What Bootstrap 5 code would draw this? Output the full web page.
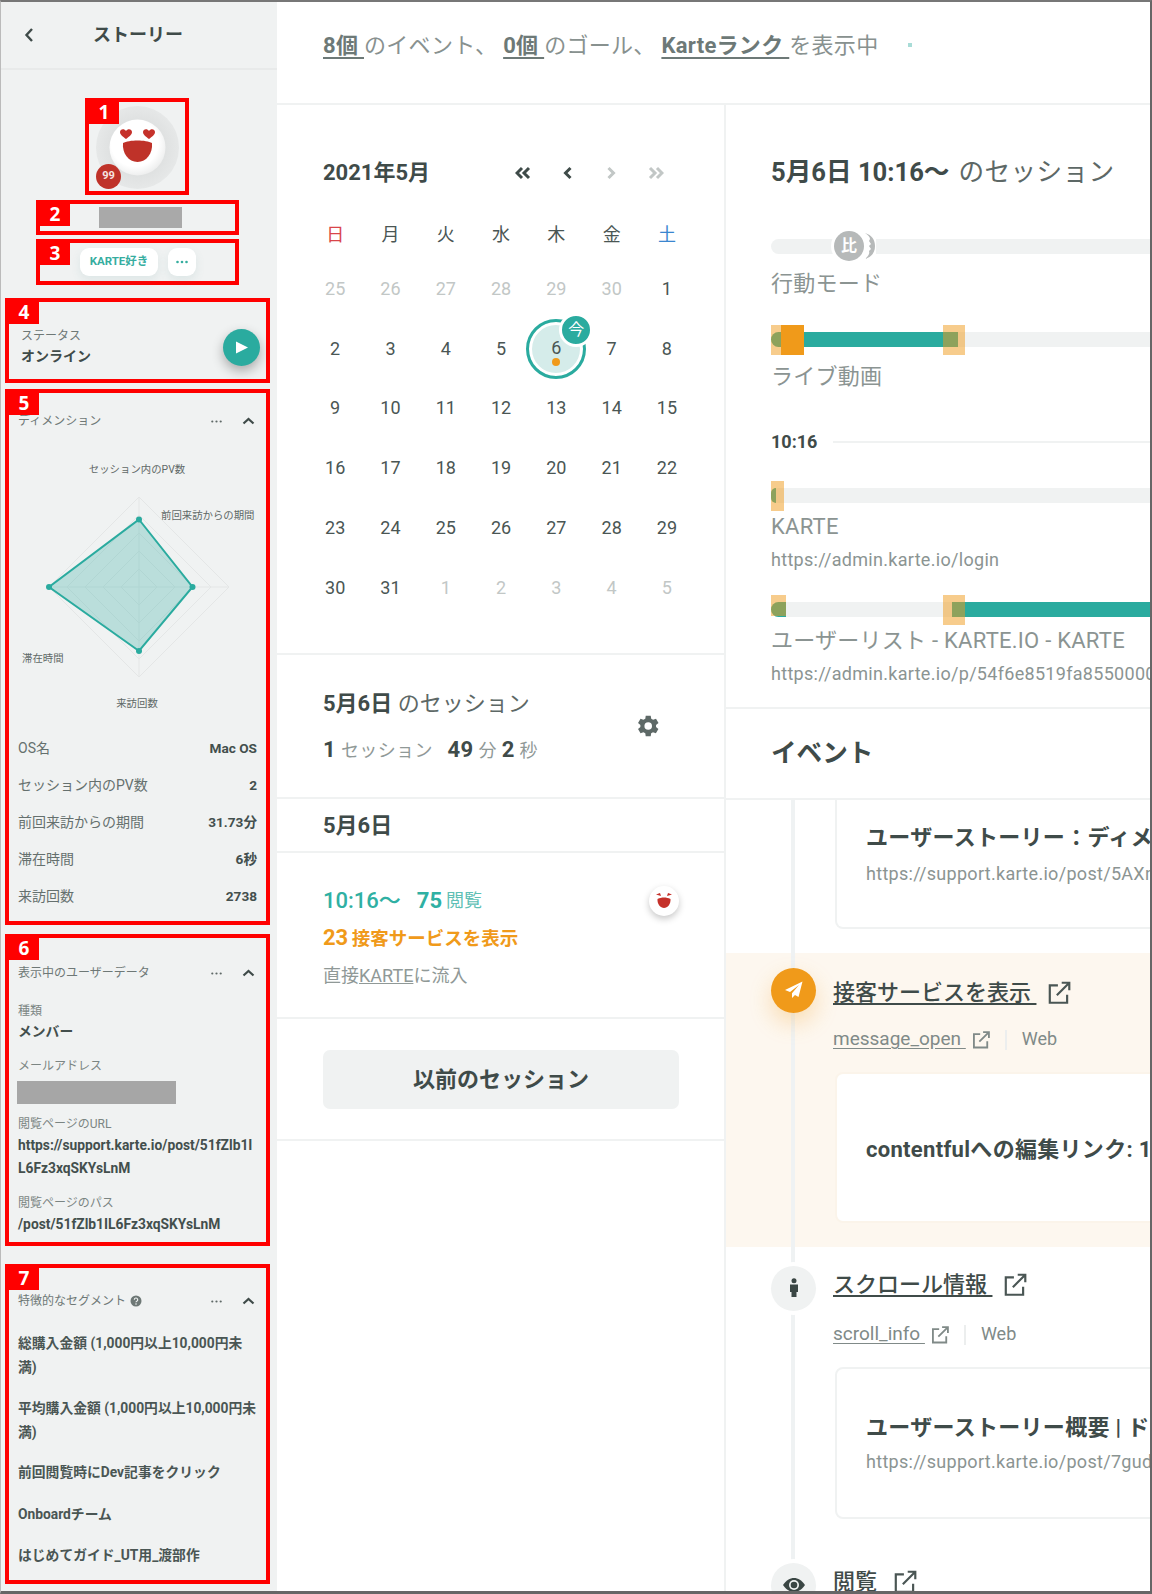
<!DOCTYPE html>
<html lang="ja">
<head>
<meta charset="utf-8">
<title>ストーリー</title>
<link href="https://cdn.jsdelivr.net/npm/bootstrap@5.3.0/dist/css/bootstrap.min.css" rel="stylesheet">
<style>
html,body{margin:0;height:100%;overflow:hidden;background:#fff}
body{font-family:Roboto,"Noto Sans CJK JP",sans-serif;color:#3f4b49;font-size:14px}
.frame{width:1152px;height:1594px;border-top:2px solid #777;border-right:2px solid #666;border-bottom:3px solid #666;border-left:1px solid #bbb;overflow:hidden;box-sizing:border-box}
.side{width:276px;flex:none;background:#f0f2f2;height:100%}
.side-head{height:68px;border-bottom:2px solid #e8eaea;padding-left:22px}
.side-head h1{font-size:18px;font-weight:700;margin:0;flex:1;text-align:center;padding-right:36px;color:#3f4b49}
.note{border:4px solid #f00;position:relative;box-sizing:border-box}
.tag{position:absolute;left:0;top:0;width:30px;height:22px;background:#f00;color:#fff;font:700 19px/21px "Open Sans",sans-serif;text-align:center;z-index:3}
.n1{width:104px;height:97px;margin:28px 0 0 84px}
.n2{width:203px;height:35px;margin:5px 0 0 35px}
.n3{width:203px;height:46px;margin:4px 0 0 35px;padding-top:5px;padding-left:40px;gap:10px}
.n4{width:265px;height:85px;margin:13px 0 0 4px;padding-left:12px}
.n5{width:265px;height:536px;margin:6px 0 0 4px;padding:16px 9px 0 9px}
.n6{width:265px;height:312px;margin:9px 0 0 4px;padding:23px 9px 0 9px}
.n7{width:265px;height:320px;margin:18px 0 0 4px;padding:21px 9px 0 9px}
.avatar-svg{display:block;margin:4px 0 0 7px}
.rank{position:absolute;left:7px;top:62px;width:25px;height:25px;background:#bf3229;color:#f6e4e2;font-size:11px;font-weight:700;z-index:2}
.mask-a{width:83px;height:21px;background:#a9a9a9;margin:3px 0 0 59px}
.mask-b{width:159px;height:23px;background:#a6a6a6;margin:5px 0 10px -1px}
.pill{height:28px;background:#fff;border-radius:9px;color:#36ad9f;font-size:11.5px;font-weight:700;box-shadow:0 4px 10px rgba(80,150,145,.12)}
.pill-a{width:78px}.pill-b{width:28px}
.st-lab{font-size:12px;height:20px;line-height:20px;margin-top:24px;color:#6e7876}
.st-val{font-size:14px;font-weight:700;height:22px;line-height:22px;margin-top:-1px;color:#3f4b49}
.play{width:37px;height:37px;background:#2aab9f;box-shadow:0 5px 12px rgba(0,0,0,.3);margin:27px 6px 0 0}
.sec-h{height:24px;font-size:12px;color:#6e7876}
.sec-tools{gap:20px;margin-right:2px}
.radar{display:block;margin:-1px 0 0 -9px;width:257px;height:298px}
.radar text{font-family:Roboto,"Noto Sans CJK JP",sans-serif;font-size:10.4px;fill:#5f6967}
.stat{height:37px;font-size:14px;color:#65706e}
.stat b{font-weight:700;color:#434f4d;font-size:13.6px}
.ud-lab{height:20px;line-height:20px;font-size:12px;color:#7b8583}
.ud-val{font-size:13.8px;font-weight:700;line-height:23px;color:#434f4d;white-space:nowrap}
.seg{font-size:13.8px;font-weight:700;line-height:23.5px;color:#4a5654;white-space:nowrap;margin-top:18px}
.main{flex:1;min-width:0;height:100%}
.top{height:103px;border-bottom:2px solid #f0f2f2;padding:0 0 14px 46px;font-size:22px;letter-spacing:.3px;color:#88918f;white-space:pre;position:relative}
.top u{font-weight:700;color:#6d7977;text-underline-offset:4px}
.top .speck{width:4px;height:4px;background:#a8dcd7;margin-left:30px;display:inline-block}
.col-l{width:449px;flex:none;border-right:2px solid #f0f2f2;height:100%}
.col-r{flex:1;min-width:0;overflow:hidden;height:100%}
.cal{height:550px;border-bottom:2px solid #f0f2f2;padding:48px 0 0 30px;box-sizing:border-box}
.cal-head{height:40px;width:387px;padding-left:16px}
.cal-title{font-size:22px;font-weight:700;color:#3f4b49}
.cal-nav{margin-right:14px;width:165px}
.days{display:grid;grid-template-columns:repeat(7,55.3px);width:387px;margin-left:.5px}
.wd{height:40px;margin-top:22px;font-size:18px;color:#4a5654}
.dw{display:flex;align-items:center;justify-content:center}
.dn{height:59.8px;font-size:18px;color:#4a5654;position:relative}
.off{color:#c2c7c6}
.ring{position:absolute;left:50%;top:50%;width:60px;height:60px;margin:-29px 0 0 -30px;border:3px solid #2aab9f;background:#d5ecea;box-shadow:inset 0 0 0 3px #fff}
.today-num{position:relative;margin-top:-2px}
.odot{position:absolute;left:50%;top:50%;width:8px;height:8px;margin:10px 0 0 -4px;background:#f09a1a}
.now{position:absolute;left:50%;top:50%;width:34px;height:34px;margin:-35px 0 0 3px;background:#2aab9f;border:3px solid #fff;color:#fff;font-size:16px;line-height:1}
.sess{height:144px;border-bottom:2px solid #f0f2f2;padding:0 45px 0 46px;box-sizing:border-box}
.sess-txt{margin-bottom:5px}
.sess-a{height:46px;line-height:46px;font-size:22px;color:#5d6866}
.sess-a b{color:#3f4b49}
.sess-b{height:32px;line-height:32px;margin-top:7px;font-size:18px;letter-spacing:.4px;color:#909997}
.sess-b b{font-size:22px;color:#3f4b49}
.gear{margin-right:18px}
.t22{font-size:22px}.t18{font-size:18px}
.gry{color:#909997}
.day-row{height:54px;border-bottom:2px solid #f0f2f2;padding:1px 0 0 46px;font-size:22px;font-weight:700;box-sizing:border-box}
.visit{height:166px;border-bottom:2px solid #f0f2f2;padding:33px 45px 0 46px;box-sizing:border-box;position:relative}
.ln{height:30px;line-height:30px;white-space:nowrap}
.ln-m{margin-top:7px}
.ln-n{margin-top:8px}
.teal{color:#2fb0a3}.org{color:#f09a1a}
.mini{width:30px;height:30px;background:#fff;box-shadow:0 3px 7px rgba(0,0,0,.22);margin:0}
.prev-wrap{height:122px;border-bottom:2px solid #f0f2f2;padding:31px 45px 0 46px;box-sizing:border-box}
.btn.prev{width:100%;height:59px;background:#f0f2f2;border:0;border-radius:7px;font-size:22px;font-weight:700;color:#3f4b49;padding:0}
.sum{padding:48px 0 21px 45px;border-bottom:2px solid #f0f2f2;white-space:nowrap;height:604px;box-sizing:border-box}
.sum-title{height:40px;font-size:25.6px;color:#5d6866}
.sum-title b{color:#3f4b49}
.sum-rest{margin-left:9px;letter-spacing:.4px}
.bar{height:15px;background:#f0f2f2;border-radius:8px 0 0 8px;position:relative;width:600px}
.fill{position:absolute;top:0;bottom:0;background:#2aab9f}
.fill-l{border-radius:8px 0 0 8px}
.box-o{position:absolute;background:rgba(240,154,26,.5)}
.box-s{position:absolute;background:#f09a1a}
.mode{position:absolute;left:63px;top:-8px;width:30px;height:30px;background:#b6b9b9;color:#fff;font-size:16px;font-weight:700;box-shadow:0 0 0 3px #fff}
.moon{position:absolute;left:93px;top:-9px;width:12px;height:32px;background:#fff}
.lab{height:30px;line-height:30px;font-size:22px;letter-spacing:.25px;color:#8b9492}
.url{height:28px;line-height:28px;font-size:18px;letter-spacing:.3px;color:#8b9492}
.time{height:24px;font-size:18px;font-weight:700}
.time i{flex:1;height:2px;background:#f0f2f2;margin-left:16px;display:block}
.ev-head{height:91px;border-bottom:2px solid #f0f2f2;padding:0 0 0 45px;font-size:25.6px;font-weight:700;color:#3f4b49;box-sizing:border-box}
.tl{position:relative;white-space:nowrap;height:800px}
.tl-line{position:absolute;left:65px;top:0;bottom:0;width:4px;background:#eff2f3;z-index:1}
.ev{position:relative;padding-left:107px}
.ev-ic{position:absolute;left:45px;width:45px;height:45px;z-index:2}
.ev-ic.o{background:#f09a1a;box-shadow:0 10px 22px rgba(240,154,26,.28)}
.ev-ic.g{background:#f0f2f2;box-shadow:0 0 0 4px #fff}
.ev-t{height:32px;font-size:22px;font-weight:500;color:#3f4b49}
.ev-t u,.ev-s u{text-underline-offset:3px;white-space:pre}
.ev-t svg{margin-left:10px}
.ev-s{height:28px;font-size:19px;color:#808a88}
.ev-s svg{margin-left:5px}
.ev-s .sep{width:2px;height:20px;background:#eceeee;margin:0 15px 0 14px}
.ev-s .web{font-size:18px;margin-top:-2px}
.ev-card{width:500px;margin-left:2px;background:#fff;border:2px solid #f0f2f2;border-radius:8px;padding-left:29px;box-sizing:border-box}
.card-t{font-size:22px;font-weight:700;height:30px;line-height:30px;letter-spacing:.3px;color:#3f4b49}
.card-u{font-size:18px;height:28px;line-height:28px;letter-spacing:.3px;color:#8b9492}
.band{background:#fdf7ef;height:294px;margin-top:24px;padding-top:24px}
.band .ev-card{border-color:#fbf4ea}
</style>
</head>
<body>
<div class="frame d-flex">
  <aside class="side">
    <div class="side-head d-flex align-items-center">
      <svg width="12" height="16" viewBox="0 0 12 16"><path d="M9 2 3.500 8 9 14" fill="none" stroke="#3f4b49" stroke-width="2.400"/></svg>
      <h1>ストーリー</h1>
    </div>

    <div class="note n1">
      <span class="tag">1</span>
      <svg class="avatar-svg" width="83" height="83" viewBox="0 0 83 83">
        <defs>
          <radialGradient id="halo"><stop offset="0" stop-color="#cfd2d2"/><stop offset=".75" stop-color="#e1e3e3"/><stop offset="1" stop-color="#e6e8e8"/></radialGradient>
          <radialGradient id="ball" cx=".45" cy=".42" r=".6"><stop offset=".7" stop-color="#fff"/><stop offset="1" stop-color="#eceded"/></radialGradient>
        </defs>
        <circle cx="41.500" cy="41.500" r="41.500" fill="url(#halo)"/>
        <circle cx="41.500" cy="41.500" r="28" fill="url(#ball)"/>
        <path d="M30 33c-3-2.300-6-4.300-6-7 0-3.200 4.300-4 6-1 1.700-3 6-2.200 6 1 0 2.700-3 4.700-6 7z" fill="#c5312a"/>
        <path d="M53 33c-3-2.300-6-4.300-6-7 0-3.200 4.300-4 6-1 1.700-3 6-2.200 6 1 0 2.700-3 4.700-6 7z" fill="#c5312a"/>
        <path d="M27 37c6-3.500 23-3.500 29 0 1 10-5.500 19-14.500 19S26 47 27 37z" fill="#bf3229"/>
      </svg>
      <span class="rank rounded-circle d-flex align-items-center justify-content-center">99</span>
    </div>

    <div class="note n2"><span class="tag">2</span><div class="mask-a"></div></div>

    <div class="note n3 d-flex"><span class="tag">3</span>
      <span class="pill pill-a d-flex align-items-center justify-content-center">KARTE好き</span>
      <span class="pill pill-b d-flex align-items-center justify-content-center"><svg width="12" height="4" viewBox="0 0 12 4" fill="#36ad9f"><circle cx="1.500" cy="2" r="1.300"/><circle cx="6" cy="2" r="1.300"/><circle cx="10.500" cy="2" r="1.300"/></svg></span>
    </div>

    <div class="note n4 d-flex justify-content-between align-items-start"><span class="tag">4</span>
      <div><div class="st-lab">ステータス</div><div class="st-val">オンライン</div></div>
      <span class="play rounded-circle d-flex align-items-center justify-content-center"><svg width="15" height="15" viewBox="0 0 15 15"><path d="M2 1.500 14 7.500 2 13.500z" fill="#fff"/></svg></span>
    </div>

    <div class="note n5"><span class="tag">5</span>
      <div class="sec-h d-flex justify-content-between align-items-center"><span>ディメンション</span>
        <span class="sec-tools d-flex align-items-center"><svg width="11" height="3" viewBox="0 0 11 3" fill="#5f6967"><circle cx="1.300" cy="1.500" r="1.100"/><circle cx="5.500" cy="1.500" r="1.100"/><circle cx="9.700" cy="1.500" r="1.100"/></svg><svg width="13" height="8" viewBox="0 0 13 8"><path d="M1.500 6.500 6.500 2l5 4.500" fill="none" stroke="#3f4b49" stroke-width="2.200"/></svg></span>
      </div>
      <svg class="radar" viewBox="0 0 257 298">
        <g fill="none" stroke="#e4e6e6" stroke-width="1">
          <path d="M130 137l18 18-18 18-18-18z"/>
          <path d="M130 119l36 36-36 36-36-36z"/>
          <path d="M130 101l54 54-54 54-54-54z"/>
          <path d="M130 83l72 72-72 72-72-72z"/>
          <path d="M130 65l90 90-90 90-90-90z"/>
          <path d="M130 65v180M40 155h180"/>
        </g>
        <path d="M130 87.500 183.500 155 130 219 40 155z" fill="#2aab9f" fill-opacity=".27" stroke="#2aab9f" stroke-width="2"/>
        <g fill="#2aab9f"><circle cx="130" cy="87.500" r="3"/><circle cx="183.500" cy="155" r="3"/><circle cx="130" cy="219" r="3"/><circle cx="40" cy="155" r="3"/></g>
        <text x="128" y="41" text-anchor="middle">セッション内のPV数</text>
        <text x="152" y="87">前回来訪からの期間</text>
        <text x="13" y="230">滞在時間</text>
        <text x="128" y="275" text-anchor="middle">来訪回数</text>
      </svg>
      <div class="stat d-flex justify-content-between align-items-center"><span>OS名</span><b>Mac OS</b></div>
      <div class="stat d-flex justify-content-between align-items-center"><span>セッション内のPV数</span><b>2</b></div>
      <div class="stat d-flex justify-content-between align-items-center"><span>前回来訪からの期間</span><b>31.73分</b></div>
      <div class="stat d-flex justify-content-between align-items-center"><span>滞在時間</span><b>6秒</b></div>
      <div class="stat d-flex justify-content-between align-items-center"><span>来訪回数</span><b>2738</b></div>
    </div>

    <div class="note n6"><span class="tag">6</span>
      <div class="sec-h d-flex justify-content-between align-items-center"><span>表示中のユーザーデータ</span>
        <span class="sec-tools d-flex align-items-center"><svg width="11" height="3" viewBox="0 0 11 3" fill="#5f6967"><circle cx="1.300" cy="1.500" r="1.100"/><circle cx="5.500" cy="1.500" r="1.100"/><circle cx="9.700" cy="1.500" r="1.100"/></svg><svg width="13" height="8" viewBox="0 0 13 8"><path d="M1.500 6.500 6.500 2l5 4.500" fill="none" stroke="#3f4b49" stroke-width="2.200"/></svg></span>
      </div>
      <div class="ud-lab mt-3">種類</div>
      <div class="ud-val" style="margin-top:-1px">メンバー</div>
      <div class="ud-lab" style="margin-top:13px">メールアドレス</div>
      <div class="mask-b"></div>
      <div class="ud-lab">閲覧ページのURL</div>
      <div class="ud-val">https://support.karte.io/post/51fZlb1I<br>L6Fz3xqSKYsLnM</div>
      <div class="ud-lab" style="margin-top:13px">閲覧ページのパス</div>
      <div class="ud-val">/post/51fZlb1IL6Fz3xqSKYsLnM</div>
    </div>

    <div class="note n7"><span class="tag">7</span>
      <div class="sec-h d-flex justify-content-between align-items-center"><span class="d-flex align-items-center gap-1">特徴的なセグメント <svg width="12" height="12" viewBox="0 0 12 12"><circle cx="6" cy="6" r="5.500" fill="#6e7876"/><path d="M4.300 4.700a1.700 1.700 0 1 1 2.500 1.500c-.6.300-.8.600-.8 1.100" fill="none" stroke="#f0f2f2" stroke-width="1.200"/><circle cx="6" cy="9" r=".8" fill="#f0f2f2"/></svg></span>
        <span class="sec-tools d-flex align-items-center"><svg width="11" height="3" viewBox="0 0 11 3" fill="#5f6967"><circle cx="1.300" cy="1.500" r="1.100"/><circle cx="5.500" cy="1.500" r="1.100"/><circle cx="9.700" cy="1.500" r="1.100"/></svg><svg width="13" height="8" viewBox="0 0 13 8"><path d="M1.500 6.500 6.500 2l5 4.500" fill="none" stroke="#3f4b49" stroke-width="2.200"/></svg></span>
      </div>
      <div class="seg" style="margin-top:19px">総購入金額 (1,000円以上10,000円未<br>満)</div>
      <div class="seg">平均購入金額 (1,000円以上10,000円未<br>満)</div>
      <div class="seg" style="margin-top:17px">前回閲覧時にDev記事をクリック</div>
      <div class="seg">Onboardチーム</div>
      <div class="seg">はじめてガイド_UT用_渡部作</div>
    </div>
  </aside>

  <div class="main d-flex flex-column">
    <div class="top d-flex align-items-center"><span><u>8個 </u>のイベント、 <u>0個 </u>のゴール、 <u>Karteランク </u>を表示中</span><span class="speck"></span></div>
    <div class="d-flex flex-grow-1" style="min-height:0">
      <div class="col-l">
        <div class="cal">
          <div class="cal-head d-flex justify-content-between align-items-center">
            <span class="cal-title">2021年5月</span>
            <span class="cal-nav d-flex align-items-center justify-content-between pe-3">
              <svg width="16" height="14" viewBox="0 0 16 14"><path d="M7 2 2 7l5 5M14 2 9 7l5 5" fill="none" stroke="#3f4b49" stroke-width="3"/></svg>
              <svg width="10" height="14" viewBox="0 0 10 14"><path d="M7.500 2 2.500 7l5 5" fill="none" stroke="#3f4b49" stroke-width="3"/></svg>
              <svg width="10" height="14" viewBox="0 0 10 14"><path d="M2.500 2l5 5-5 5" fill="none" stroke="#c2c7c6" stroke-width="3"/></svg>
              <svg width="16" height="14" viewBox="0 0 16 14"><path d="M2 2l5 5-5 5M9 2l5 5-5 5" fill="none" stroke="#c2c7c6" stroke-width="3"/></svg>
            </span>
          </div>
          <div class="days wd mb-1">
            <span class="dw" style="color:#d9454a">日</span><span class="dw">月</span><span class="dw">火</span><span class="dw">水</span><span class="dw">木</span><span class="dw">金</span><span class="dw" style="color:#3a86cf">土</span>
          </div>
          <div class="days">
            <span class="dw dn off">25</span><span class="dw dn off">26</span><span class="dw dn off">27</span><span class="dw dn off">28</span><span class="dw dn off">29</span><span class="dw dn off">30</span><span class="dw dn">1</span>
            <span class="dw dn">2</span><span class="dw dn">3</span><span class="dw dn">4</span><span class="dw dn">5</span>
            <span class="dw dn"><span class="ring rounded-circle"></span><span class="today-num">6</span><span class="odot rounded-circle"></span><span class="now rounded-circle d-flex align-items-center justify-content-center">今</span></span>
            <span class="dw dn">7</span><span class="dw dn">8</span>
            <span class="dw dn">9</span><span class="dw dn">10</span><span class="dw dn">11</span><span class="dw dn">12</span><span class="dw dn">13</span><span class="dw dn">14</span><span class="dw dn">15</span>
            <span class="dw dn">16</span><span class="dw dn">17</span><span class="dw dn">18</span><span class="dw dn">19</span><span class="dw dn">20</span><span class="dw dn">21</span><span class="dw dn">22</span>
            <span class="dw dn">23</span><span class="dw dn">24</span><span class="dw dn">25</span><span class="dw dn">26</span><span class="dw dn">27</span><span class="dw dn">28</span><span class="dw dn">29</span>
            <span class="dw dn">30</span><span class="dw dn">31</span><span class="dw dn off">1</span><span class="dw dn off">2</span><span class="dw dn off">3</span><span class="dw dn off">4</span><span class="dw dn off">5</span>
          </div>
        </div>

        <div class="sess d-flex justify-content-between align-items-center">
          <div class="sess-txt">
            <div class="sess-a text-nowrap"><b>5月6日</b> のセッション</div>
            <div class="sess-b text-nowrap"><b>1</b> セッション &nbsp; <b>49</b> 分 <b>2</b> 秒</div>
          </div>
          <svg class="gear" width="26" height="26" viewBox="0 0 24 24"><path fill="#5e6967" d="M19.400 13a7.700 7.700 0 0 0 0-2l2.300-1.800-2.300-4-2.700 1.100a8 8 0 0 0-1.700-1L14.500 2.500h-4.600L9.500 5.300a8 8 0 0 0-1.700 1L5.100 5.200l-2.300 4L5 11a7.700 7.700 0 0 0 0 2l-2.200 1.800 2.300 4 2.700-1.100a8 8 0 0 0 1.700 1l.4 2.800h4.600l.4-2.800a8 8 0 0 0 1.700-1l2.700 1.100 2.300-4zM12.200 15.500a3.500 3.500 0 1 1 0-7 3.500 3.500 0 0 1 0 7z"/></svg>
        </div>

        <div class="day-row d-flex align-items-center">5月6日</div>

        <div class="visit d-flex justify-content-between">
          <div>
            <div class="ln teal d-flex align-items-center"><span class="t22" style="font-weight:500">10:16〜</span><b class="t22 ms-3">75</b><span class="t18 ms-1" style="color:#5fbfb5">閲覧</span></div>
            <div class="ln ln-m org"><b class="t22">23</b> <b style="font-size:18.500px">接客サービスを表示</b></div>
            <div class="ln ln-n t18 gry">直接<u>KARTE</u>に流入</div>
          </div>
          <span class="mini rounded-circle d-flex align-items-center justify-content-center"><svg width="20" height="18" viewBox="0 0 20 18"><path d="M2 2.500 6 1l1 3zM18 2.500 14 1l-1 3z" fill="#c5312a"/><path d="M3.500 7c4-2 9-2 13 0 .5 5-3 9-6.500 9s-7-4-6.500-9z" fill="#c5312a"/></svg></span>
        </div>

        <div class="prev-wrap"><button type="button" class="btn prev">以前のセッション</button></div>
      </div>

      <div class="col-r">
        <div class="sum">
          <div class="sum-title d-flex align-items-center"><b>5月6日 10:16〜</b><span class="sum-rest">のセッション</span></div>
          <div class="bar" style="margin-top:46px"><span class="mode rounded-circle d-flex align-items-center justify-content-center">比</span><span class="moon"><svg width="12" height="32" viewBox="0 0 12 32"><path d="M1 3c7 2 10 7 10 13s-3 11-10 13c3-3 5-5 4-8l2-2-2-3 2-2-2-3 1-2c0-2-2-4-5-6z" fill="#b6b9b9"/></svg></span></div>
          <div class="lab" style="margin-top:15px">行動モード</div>
          <div class="bar" style="margin-top:33px">
            <span class="fill fill-l" style="left:0;width:187px"></span>
            <span class="box-o" style="left:0;top:-7px;width:33px;height:30px"></span>
            <span class="box-s" style="left:10px;top:-7px;width:23px;height:30px"></span>
            <span class="box-o" style="left:172px;top:-7px;width:22px;height:30px"></span>
          </div>
          <div class="lab" style="margin-top:15px">ライブ動画</div>
          <div class="time d-flex align-items-center" style="margin-top:38px"><span>10:16</span><i></i></div>
          <div class="bar" style="margin-top:34px">
            <span class="fill fill-l" style="left:0;width:5px"></span>
            <span class="box-o" style="left:0;top:-7px;width:13px;height:30px"></span>
          </div>
          <div class="lab" style="margin-top:9px">KARTE</div>
          <div class="url" style="margin-top:4px">https://admin.karte.io/login</div>
          <div class="bar" style="margin-top:28px">
            <span class="fill fill-l" style="left:0;width:15px"></span>
            <span class="fill" style="left:181px;right:0"></span>
            <span class="box-o" style="left:0;top:-7px;width:15px;height:21px"></span>
            <span class="box-o" style="left:172px;top:-7px;width:22px;height:30px"></span>
          </div>
          <div class="lab" style="margin-top:9px">ユーザーリスト - KARTE.IO - KARTE</div>
          <div class="url" style="margin-top:4px">https://admin.karte.io/p/54f6e8519fa8550000</div>
        </div>

        <div class="ev-head d-flex align-items-center">イベント</div>

        <div class="tl">
          <span class="tl-line"></span>
          <div class="ev">
            <div class="ev-card" style="height:129px;border-top:0;border-radius:0 0 8px 8px;padding-top:23px">
              <div class="card-t">ユーザーストーリー：ディメンション</div>
              <div class="card-u" style="margin-top:7px">https://support.karte.io/post/5AXn</div>
            </div>
          </div>
          <div class="ev band">
            <span class="ev-ic o rounded-circle d-flex align-items-center justify-content-center" style="top:15px"><svg width="20" height="20" viewBox="0 0 20 20"><path d="M18.500 1.500 1 10l5 2 9-7-7 8.200V18l3-3 3.500 2z" fill="#fff"/></svg></span>
            <div class="ev-t d-flex align-items-center"><u>接客サービスを表示 </u><svg width="26" height="26" viewBox="0 0 24 24" fill="none" stroke="#4a5654" stroke-width="2"><path d="M11 5H3.500v16h16v-7.500M10 14 21.500 2.500M14.500 2.500h7v7"/></svg></div>
            <div class="ev-s d-flex align-items-center" style="margin-top:17px"><u>message_open </u><svg width="20" height="20" viewBox="0 0 24 24" fill="none" stroke="#808a88" stroke-width="2.200"><path d="M11 5H3.500v16h16v-7.500M10 14 21.500 2.500M14.500 2.500h7v7"/></svg><span class="sep"></span><span class="web">Web</span></div>
            <div class="ev-card d-flex align-items-center" style="height:151px;margin-top:18px;padding-top:6px"><div class="card-t">contentfulへの編集リンク: 1</div></div>
          </div>
          <div class="ev" style="padding-top:22px">
            <span class="ev-ic g rounded-circle d-flex align-items-center justify-content-center" style="top:19px"><svg width="10" height="20" viewBox="0 0 10 20" fill="#3a4644"><circle cx="5" cy="2.800" r="2.500"/><path d="M1 6.500h8v7.500H7.500v5h-5v-5H1z"/></svg></span>
            <div class="ev-t d-flex align-items-center"><u>スクロール情報 </u><svg width="26" height="26" viewBox="0 0 24 24" fill="none" stroke="#4a5654" stroke-width="2"><path d="M11 5H3.500v16h16v-7.500M10 14 21.500 2.500M14.500 2.500h7v7"/></svg></div>
            <div class="ev-s d-flex align-items-center" style="margin-top:20px"><u>scroll_info </u><svg width="20" height="20" viewBox="0 0 24 24" fill="none" stroke="#808a88" stroke-width="2.200"><path d="M11 5H3.500v16h16v-7.500M10 14 21.500 2.500M14.500 2.500h7v7"/></svg><span class="sep"></span><span class="web">Web</span></div>
            <div class="ev-card" style="height:152px;margin-top:18px;padding-top:44px">
              <div class="card-t">ユーザーストーリー概要 | ド</div>
              <div class="card-u" style="margin-top:5px">https://support.karte.io/post/7gud</div>
            </div>
          </div>
          <div class="ev" style="margin-top:47px">
            <span class="ev-ic g rounded-circle d-flex align-items-center justify-content-center" style="top:-3px"><svg width="24" height="16" viewBox="0 0 24 16"><path d="M1 8c3-4.500 7-7 11-7s8 2.500 11 7c-3 4.500-7 7-11 7S4 12.500 1 8z" fill="#3a4644"/><circle cx="12" cy="8" r="5" fill="#f0f2f2"/><circle cx="12" cy="8" r="3.300" fill="#3a4644"/></svg></span>
            <div class="ev-t d-flex align-items-center"><u>閲覧 </u><svg width="26" height="26" viewBox="0 0 24 24" fill="none" stroke="#4a5654" stroke-width="2"><path d="M11 5H3.500v16h16v-7.500M10 14 21.500 2.500M14.500 2.500h7v7"/></svg></div>
          </div>
        </div>
      </div>
    </div>
  </div>
</div>
<script src="https://cdn.jsdelivr.net/npm/bootstrap@5.3.0/dist/js/bootstrap.bundle.min.js"></script>
</body>
</html>
